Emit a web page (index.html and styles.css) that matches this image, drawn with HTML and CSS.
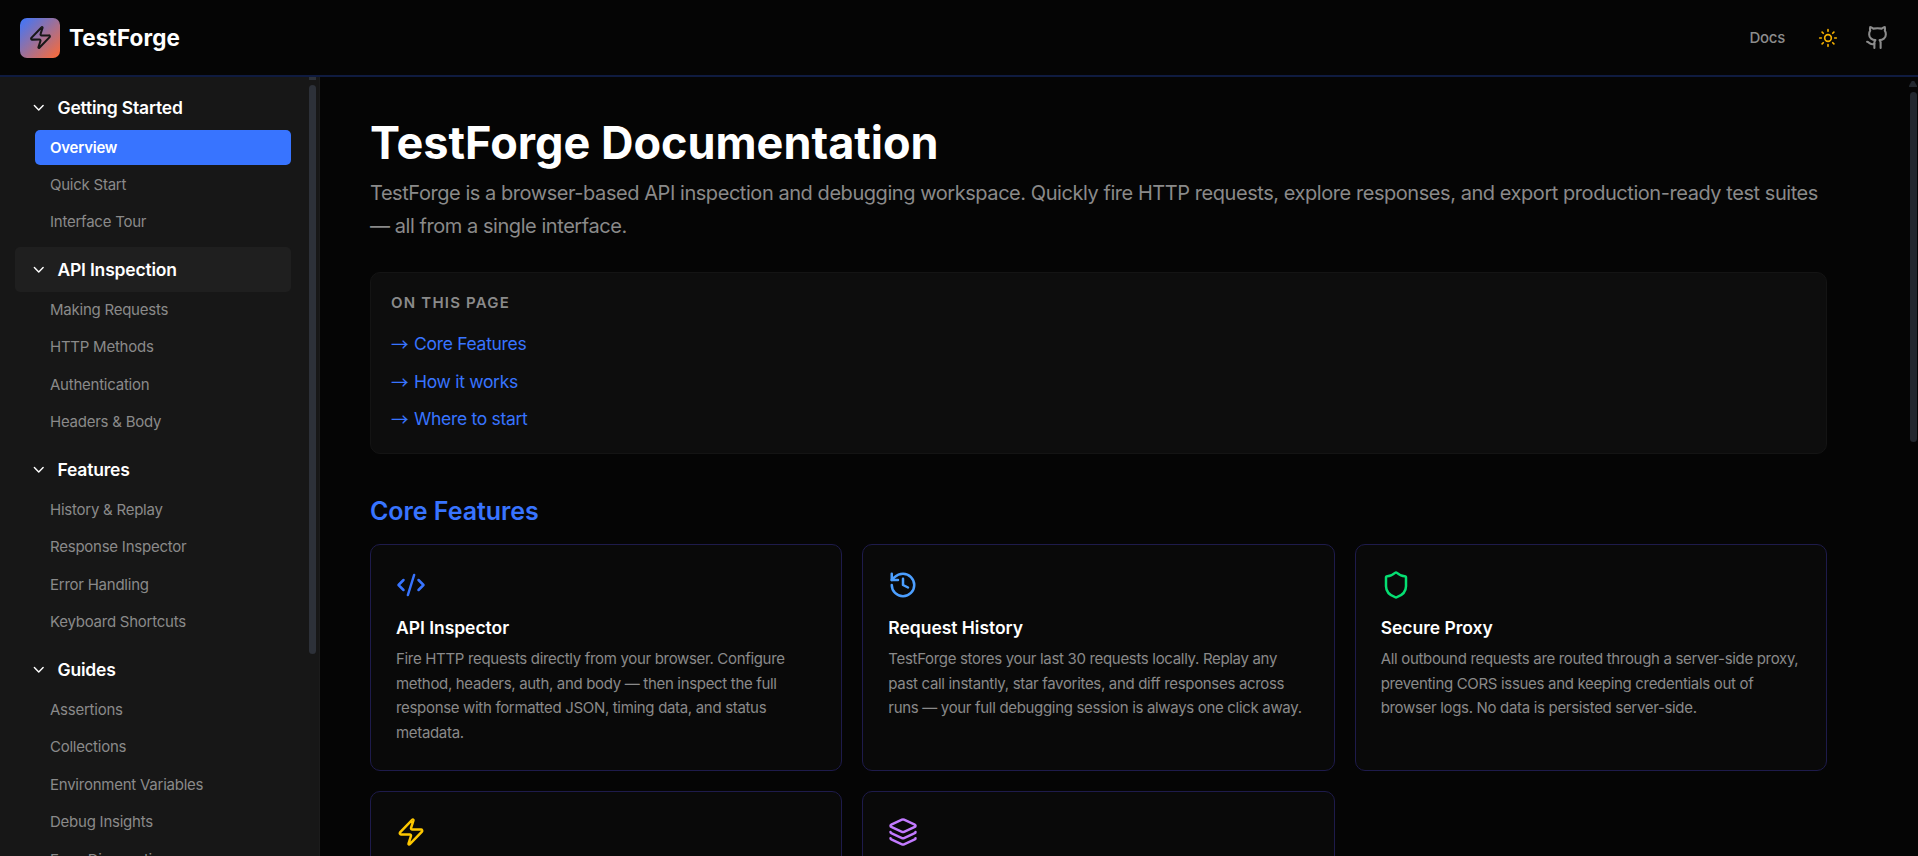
FILE: index.html
```
<!DOCTYPE html>
<html lang="en">
<head>
    <meta charset="UTF-8">
    <meta name="viewport" content="width=device-width, initial-scale=1.0">
    <title>TestForge Documentation</title>
    <link rel="stylesheet" href="styles.css">
</head>
<body>
    <!-- Header -->
    <header class="header">
        <a class="brand" href="#">
            <span class="brand-logo">
                <svg class="icon" width="25" height="25" viewBox="0 0 24 24"><path d="M4 14a1 1 0 0 1-.78-1.63l9.9-10.2a.5.5 0 0 1 .86.46l-1.92 6.02A1 1 0 0 0 13 10h7a1 1 0 0 1 .78 1.63l-9.9 10.2a.5.5 0 0 1-.86-.46l1.92-6.02A1 1 0 0 0 11 14z"/></svg>
            </span>
            <span class="brand-name">TestForge</span>
        </a>
        <nav class="header-nav">
            <a class="header-link" href="#">Docs</a>
            <svg class="icon icon-sun" width="20" height="20" viewBox="0 0 24 24"><circle cx="12" cy="12" r="4"/><path d="M12 2v2M12 20v2M4.93 4.93l1.41 1.41M17.66 17.66l1.41 1.41M2 12h2M20 12h2M6.34 17.66l-1.41 1.41M19.07 4.93l-1.41 1.41"/></svg>
            <svg class="icon icon-github" width="25" height="25" viewBox="0 0 24 24"><path d="M15 22v-4a4.8 4.8 0 0 0-1-3.5c3 0 6-2 6-5.5.08-1.25-.27-2.48-1-3.5.28-1.15.28-2.35 0-3.5 0 0-1 0-3 1.5-2.64-.5-5.36-.5-8 0C6 2 5 2 5 2c-.3 1.15-.3 2.35 0 3.5A5.403 5.403 0 0 0 4 9c0 3.5 3 5.5 6 5.5-.39.49-.68 1.05-.85 1.65-.17.6-.22 1.23-.15 1.85v4"/><path d="M9 18c-4.51 2-5-2-7-2"/></svg>
        </nav>
    </header>

    <div class="layout">
        <!-- Sidebar -->
        <aside class="sidebar">
            <div class="section">
                <div class="section-title"><svg class="icon" width="17.5" height="17.5" viewBox="0 0 24 24"><path d="m6 9 6 6 6-6"/></svg>Getting Started</div>
                <a class="item active" href="#">Overview</a>
                <a class="item" href="#">Quick Start</a>
                <a class="item" href="#">Interface Tour</a>
            </div>
            <div class="section">
                <div class="section-title hovered"><svg class="icon" width="17.5" height="17.5" viewBox="0 0 24 24"><path d="m6 9 6 6 6-6"/></svg>API Inspection</div>
                <a class="item" href="#">Making Requests</a>
                <a class="item" href="#">HTTP Methods</a>
                <a class="item" href="#">Authentication</a>
                <a class="item" href="#">Headers &amp; Body</a>
            </div>
            <div class="section">
                <div class="section-title"><svg class="icon" width="17.5" height="17.5" viewBox="0 0 24 24"><path d="m6 9 6 6 6-6"/></svg>Features</div>
                <a class="item" href="#">History &amp; Replay</a>
                <a class="item" href="#">Response Inspector</a>
                <a class="item" href="#">Error Handling</a>
                <a class="item" href="#">Keyboard Shortcuts</a>
            </div>
            <div class="section">
                <div class="section-title"><svg class="icon" width="17.5" height="17.5" viewBox="0 0 24 24"><path d="m6 9 6 6 6-6"/></svg>Guides</div>
                <a class="item" href="#">Assertions</a>
                <a class="item" href="#">Collections</a>
                <a class="item" href="#">Environment Variables</a>
                <a class="item" href="#">Debug Insights</a>
                <a class="item" href="#">Error Diagnostics</a>
            </div>
            <div class="side-arrow"></div>
            <div class="side-thumb"></div>
        </aside>

        <!-- Content -->
        <main class="content">
            <h1>TestForge Documentation</h1>
            <p class="lead">TestForge is a browser-based API inspection and debugging workspace. Quickly fire HTTP requests, explore responses, and export production-ready test suites — all from a single interface.</p>

            <div class="toc">
                <div class="toc-title">On this page</div>
                <a class="toc-link" href="#core"><span class="arrow">→</span>Core Features</a>
                <a class="toc-link" href="#how"><span class="arrow">→</span>How it works</a>
                <a class="toc-link" href="#start"><span class="arrow">→</span>Where to start</a>
            </div>

            <h2 id="core">Core Features</h2>
            <div class="cards">
                <div class="card">
                    <svg class="icon icon-code" width="30" height="30" viewBox="0 0 24 24"><path d="m18 16 4-4-4-4M6 8l-4 4 4 4M14.5 4l-5 16"/></svg>
                    <h3>API Inspector</h3>
                    <p>Fire HTTP requests directly from your browser. Configure method, headers, auth, and body — then inspect the full response with formatted JSON, timing data, and status metadata.</p>
                </div>
                <div class="card">
                    <svg class="icon icon-history" width="30" height="30" viewBox="0 0 24 24"><path d="M3 12a9 9 0 1 0 9-9 9.75 9.75 0 0 0-6.74 2.74L3 8"/><path d="M3 3v5h5M12 7v5l4 2"/></svg>
                    <h3>Request History</h3>
                    <p>TestForge stores your last 30 requests locally. Replay any past call instantly, star favorites, and diff responses across runs — your full debugging session is always one click away.</p>
                </div>
                <div class="card">
                    <svg class="icon icon-shield" width="30" height="30" viewBox="0 0 24 24"><path d="M20 13c0 5-3.500 7.500-7.660 8.950a1 1 0 0 1-.67-.01C7.500 20.500 4 18 4 13V6a1 1 0 0 1 1-1c2 0 4.500-1.200 6.240-2.720a1.170 1.170 0 0 1 1.520 0C14.510 3.810 17 5 19 5a1 1 0 0 1 1 1z"/></svg>
                    <h3>Secure Proxy</h3>
                    <p>All outbound requests are routed through a server-side proxy, preventing CORS issues and keeping credentials out of browser logs. No data is persisted server-side.</p>
                </div>
                <div class="card">
                    <svg class="icon icon-zap" width="30" height="30" viewBox="0 0 24 24"><path d="M4 14a1 1 0 0 1-.78-1.63l9.9-10.2a.5.5 0 0 1 .86.46l-1.92 6.02A1 1 0 0 0 13 10h7a1 1 0 0 1 .78 1.63l-9.9 10.2a.5.5 0 0 1-.86-.46l1.92-6.02A1 1 0 0 0 11 14z"/></svg>
                </div>
                <div class="card">
                    <svg class="icon icon-layers" width="30" height="30" viewBox="0 0 24 24"><path d="M12.830 2.180a2 2 0 0 0-1.660 0L2.600 6.080a1 1 0 0 0 0 1.830l8.580 3.910a2 2 0 0 0 1.660 0l8.580-3.900a1 1 0 0 0 0-1.830z"/><path d="M2 12a1 1 0 0 0 .58.91l8.600 3.910a2 2 0 0 0 1.650 0l8.580-3.900A1 1 0 0 0 22 12"/><path d="M2 17a1 1 0 0 0 .58.91l8.600 3.910a2 2 0 0 0 1.650 0l8.580-3.900A1 1 0 0 0 22 17"/></svg>
                </div>
            </div>
            <div class="page-arrow"></div>
            <div class="page-thumb"></div>
        </main>
    </div>
</body>
</html>
```
FILE: styles.css
```
* {
    box-sizing: border-box;
}
body {
    font-family: Inter, "Liberation Sans", sans-serif;
    margin: 0;
    height: 100vh;
    display: flex;
    flex-direction: column;
    overflow: hidden;
    background-color: #050505;
    color: #fff;
}
a {
    color: inherit;
    text-decoration: none;
}
.icon {
    display: block;
    flex-shrink: 0;
    fill: none;
    stroke: currentColor;
    stroke-width: 2;
    stroke-linecap: round;
    stroke-linejoin: round;
}

/* Header */
.header {
    height: 77px;
    flex-shrink: 0;
    display: flex;
    align-items: center;
    justify-content: space-between;
    padding: 0 28px 0 20px;
    border-bottom: 2px solid #0f1b40;
}
.brand {
    display: flex;
    align-items: center;
    gap: 9px;
}
.brand-logo {
    width: 40px;
    height: 40px;
    display: flex;
    align-items: center;
    justify-content: center;
    border-radius: 7px;
    background: linear-gradient(135deg, #3b76ff, #ff6a33);
    color: #171717;
}
.brand-name {
    font-size: 22.5px;
    font-weight: 700;
    letter-spacing: 0.1px;
}
.header-nav {
    display: flex;
    align-items: center;
    color: #8c8c8c;
}
.header-link {
    font-size: 15px;
    font-weight: 500;
    letter-spacing: -0.25px;
    margin-right: 33px;
}
.icon-sun {
    color: #f5b000;
    margin-right: 27px;
}

.layout {
    flex: 1;
    min-height: 0;
    display: flex;
}

/* Sidebar */
.sidebar {
    position: relative;
    width: 320px;
    flex-shrink: 0;
    padding: 7.8px 28px 0 15px;
    overflow: hidden;
    background-color: #171717;
    border-right: 1px solid #1c1c1c;
}
.section {
    margin-bottom: 7.5px;
}
.section-title {
    display: flex;
    align-items: center;
    gap: 10px;
    height: 45px;
    padding-left: 15px;
    border-radius: 5px;
    font-size: 17.5px;
    font-weight: 600;
    letter-spacing: -0.2px;
}
.section-title.hovered {
    background-color: #1f1f1f;
}
.item {
    display: block;
    height: 35px;
    margin: 0 0 2.5px 20px;
    padding: 0.25px 0 0 15px;
    border-radius: 5px;
    font-size: 15px;
    line-height: 34px;
    letter-spacing: -0.24px;
    color: #8a8a8a;
}
.item.active {
    background-color: #3874ff;
    color: #fff;
    font-weight: 600;
    line-height: 35px;
}

/* Scrollbars */
.side-thumb, .page-thumb {
    position: absolute;
    width: 7px;
    border-radius: 4px;
    background-color: #2d3139;
}
.side-thumb {
    left: 309px;
    top: 8px;
    height: 569px;
}
.side-arrow {
    position: absolute;
    left: 309px;
    top: 0;
    width: 7px;
    height: 3px;
    background-color: #2d3139;
}
.page-thumb {
    right: 1px;
    top: 15px;
    height: 350px;
    background-color: #22272e;
}
.page-arrow {
    position: absolute;
    right: 1px;
    top: 4px;
    width: 8px;
    height: 6px;
    background-color: #22272e;
    clip-path: polygon(35% 0, 65% 0, 100% 80%, 100% 100%, 0 100%, 0 80%);
}

/* Content */
.content {
    position: relative;
    flex: 1;
    padding: 38px 91px 0 50px;
    overflow: hidden;
}
h1 {
    margin: 0;
    font-size: 45px;
    line-height: 56px;
    font-weight: 700;
}
.lead {
    margin: 6px 0 29px;
    font-size: 20px;
    line-height: 33px;
    letter-spacing: -0.445px;
    color: #8a8a8a;
}
.toc {
    height: 182px;
    padding: 20px;
    border: 1px solid #141414;
    border-radius: 10px;
    background-color: #0d0d0d;
}
.toc-title {
    margin-bottom: 14px;
    font-size: 15px;
    line-height: 20px;
    font-weight: 600;
    letter-spacing: 1.2px;
    text-transform: uppercase;
    color: #8a8a8a;
}
.toc-link {
    display: flex;
    height: 37.5px;
    font-size: 17.5px;
    line-height: 34px;
    letter-spacing: -0.3px;
    color: #3874ff;
}
.arrow {
    width: 23px;
    font-family: "Noto Sans CJK SC", sans-serif;
}
h2 {
    margin: 39px 0 15px;
    font-size: 25px;
    line-height: 36px;
    font-weight: 600;
    letter-spacing: -0.05px;
    color: #3874ff;
}
.cards {
    display: grid;
    grid-template-columns: repeat(3, 1fr);
    grid-auto-rows: 227px;
    gap: 20px;
}
.card {
    padding: 25px;
    border: 1px solid #1e1b4b;
    border-radius: 10px;
    background-color: #090909;
}
.card h3 {
    margin: 16px 0 7px;
    font-size: 17.5px;
    line-height: 24px;
    font-weight: 600;
    letter-spacing: -0.03px;
}
.card p {
    margin: 0;
    font-size: 15px;
    line-height: 24.5px;
    letter-spacing: -0.32px;
    color: #8a8a8a;
}
.icon-code {
    color: #3874ff;
}
.icon-history {
    color: #4c9fff;
}
.icon-shield {
    color: #05df72;
}
.icon-zap {
    color: #fdc700;
}
.icon-layers {
    color: #c27aff;
}
```
